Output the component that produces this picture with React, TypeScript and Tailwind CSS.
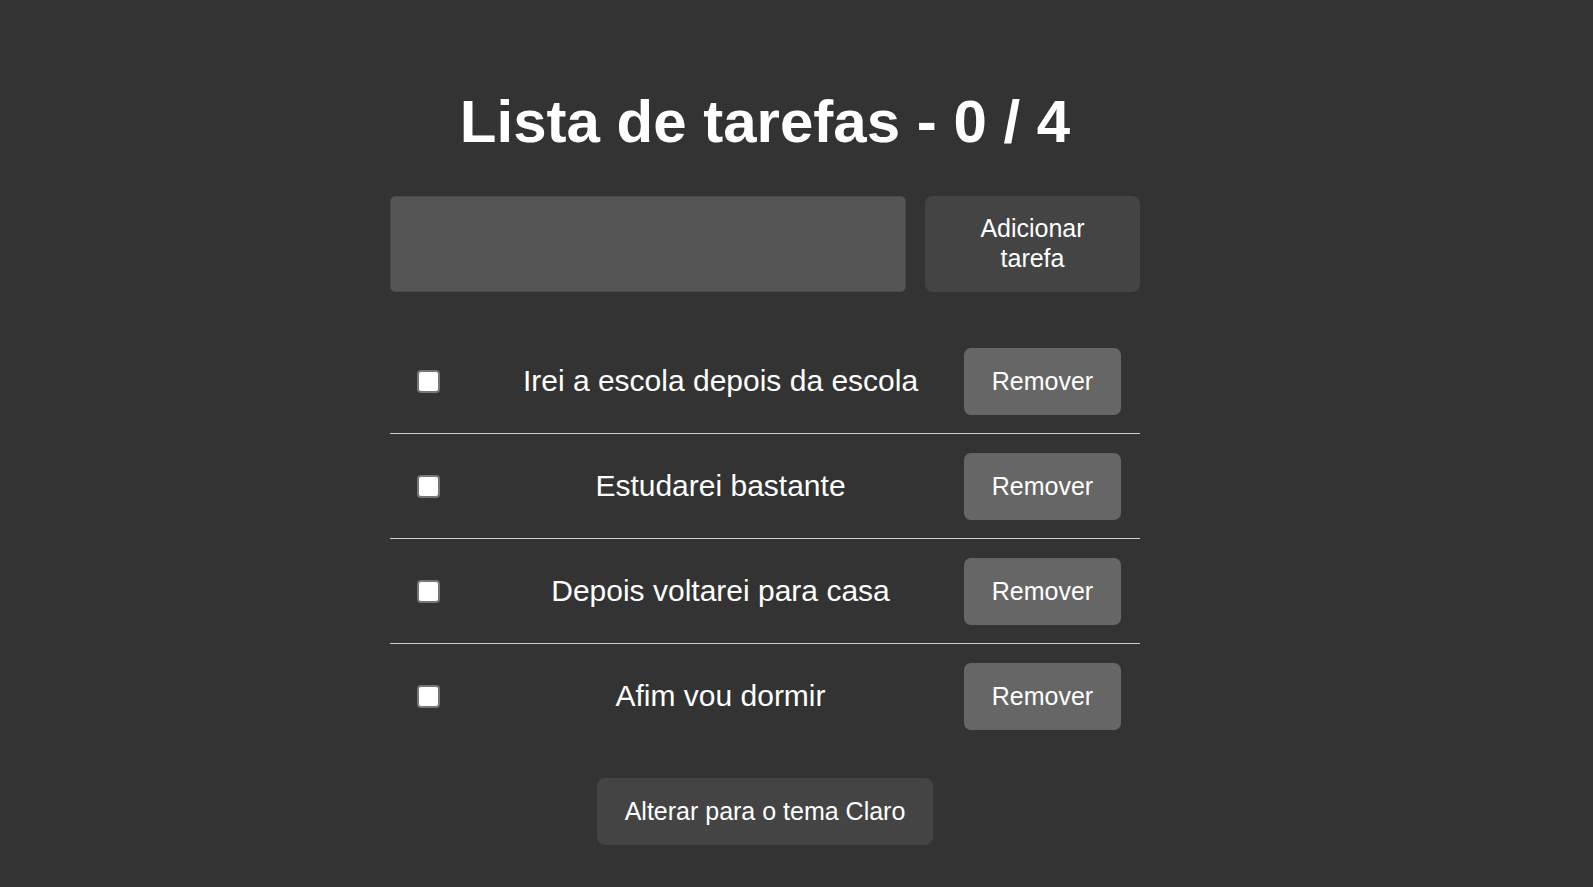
import { useState } from "react";

type Task = {
  id: number;
  text: string;
  done: boolean;
};

const initialTasks: Task[] = [
  { id: 1, text: "Irei a escola depois da escola", done: false },
  { id: 2, text: "Estudarei bastante", done: false },
  { id: 3, text: "Depois voltarei para casa", done: false },
  { id: 4, text: "Afim vou dormir", done: false },
];

export default function App() {
  const [tasks, setTasks] = useState<Task[]>(initialTasks);
  const [value, setValue] = useState("");

  const doneCount = tasks.filter((t) => t.done).length;

  const addTask = () => {
    if (!value.trim()) return;
    setTasks([...tasks, { id: Date.now(), text: value.trim(), done: false }]);
    setValue("");
  };

  const toggle = (id: number) =>
    setTasks(tasks.map((t) => (t.id === id ? { ...t, done: !t.done } : t)));

  const remove = (id: number) => setTasks(tasks.filter((t) => t.id !== id));

  return (
    <div className="min-h-screen bg-[#333333] font-['Liberation_Sans',Arial,sans-serif] text-white">
      <div className="ml-[390px] flex w-[750px] flex-col pt-[92px] pb-[42px]">
        <h1 className="text-center text-[60px] leading-[60px] font-bold">
          Lista de tarefas - {doneCount} / {tasks.length}
        </h1>

        {/* Nova tarefa */}
        <div className="mt-[44px] flex h-[96px] gap-[19px]">
          <input
            value={value}
            onChange={(e) => setValue(e.target.value)}
            className="w-[516px] rounded-[5px] border border-[#4a4a4a] bg-[#555555] px-4 text-[25px] text-white outline-none"
          />
          <button
            onClick={addTask}
            className="w-[215px] rounded-[8px] bg-[#444444] px-[28px] pb-[1px] text-[25px] leading-[29.5px] text-white"
          >
            Adicionar tarefa
          </button>
        </div>

        {/* Lista */}
        <ul className="mt-[37px]">
          {tasks.map((task, i) => (
            <li
              key={task.id}
              className={
                i < tasks.length - 1
                  ? "flex h-[105px] items-center border-b border-[#cfcfcf] pr-[19px] pl-[27px]"
                  : "flex h-[104px] items-center pr-[19px] pl-[27px]"
              }
            >
              <input
                type="checkbox"
                checked={task.done}
                onChange={() => toggle(task.id)}
                className="h-[23px] w-[23px] shrink-0 appearance-none rounded-[4px] border-2 border-[#767676] bg-white checked:bg-[#3b82f6]"
              />
              <span
                className={
                  task.done
                    ? "ml-[37px] flex-1 text-center text-[30px] leading-[34px] line-through"
                    : "ml-[37px] flex-1 text-center text-[30px] leading-[34px]"
                }
              >
                {task.text}
              </span>
              <button
                onClick={() => remove(task.id)}
                className="h-[67px] w-[157px] shrink-0 rounded-[7px] bg-[#666666] pt-[1px] text-[25px] text-white"
              >
                Remover
              </button>
            </li>
          ))}
        </ul>

        <button className="mt-[30px] h-[67px] w-[336px] self-center rounded-[8px] bg-[#444444] text-[25px] text-white">
          Alterar para o tema Claro
        </button>
      </div>
    </div>
  );
}
